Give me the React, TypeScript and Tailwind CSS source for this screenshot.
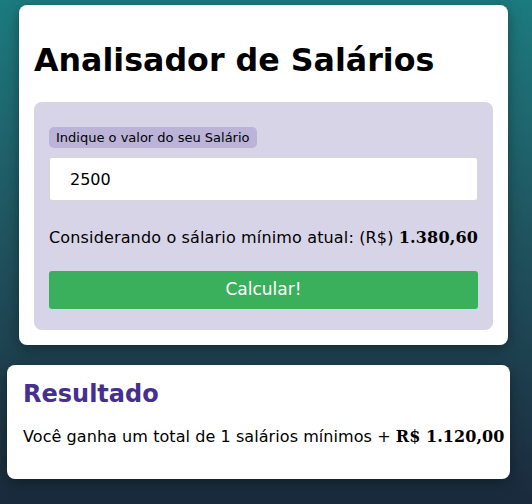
export default function App() {
  return (
    <main className="min-h-[504px] bg-gradient-to-b from-[#1b7b7f] to-[#1a2a3c] pt-[5px] pb-6 font-['DejaVu_Sans',sans-serif] text-black">
      <section className="ml-[19px] w-[489px] rounded-lg bg-white px-[15px] pt-4 pb-[15px] shadow-[0_4px_14px_rgba(0,0,0,0.35)]">
        <h1 className="my-[21px] text-[31.7px] leading-[37px] font-bold">
          Analisador de Salários
        </h1>
        <div className="mt-[23px] rounded-lg bg-[#d8d4e8] px-[15px] pt-[23px] pb-[21px]">
          <label className="inline-block rounded-[5px] bg-[#bbb3d8] px-[7px] py-[2px] text-[13px] leading-[17px]">
            Indique o valor do seu Salário
          </label>
          <input
            defaultValue="2500"
            className="mt-[8px] block h-[44px] w-full rounded-[3px] border border-[#d6d6d6] bg-white px-5 text-base outline-none"
          />
          <p className="mt-[26px] text-base leading-[22px] tracking-[0.15px]">
            Considerando o sálario mínimo atual: (R$){" "}
            <b className="font-['DejaVu_Serif',serif]">1.380,60</b>
          </p>
          <button className="mt-[22px] block h-[38px] w-full rounded-[3px] bg-[#3bb05c] text-[17px] text-white">
            Calcular!
          </button>
        </div>
      </section>
      <section className="mt-[20px] ml-[7px] w-[503px] rounded-lg bg-white pt-[15px] pr-1 pb-[31px] pl-4 shadow-[0_4px_14px_rgba(0,0,0,0.35)]">
        <h2 className="text-2xl leading-[28px] font-bold text-[#45308f]">Resultado</h2>
        <p className="mt-[18px] text-base leading-[22px] tracking-[0.07px] whitespace-nowrap">
          Você ganha um total de 1 salários mínimos +{" "}
          <b className="font-['DejaVu_Serif',serif]">R$ 1.120,00</b>
        </p>
      </section>
    </main>
  )
}
